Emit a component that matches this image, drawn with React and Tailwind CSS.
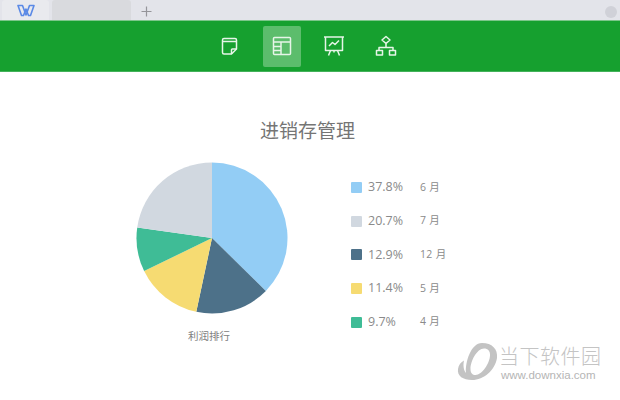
const FONT = "font-['Open_Sans','Noto_Sans_CJK_SC',sans-serif]";

const legend = [
  { color: "bg-[#93cdf5]", pct: "37.8%", month: "6 月" },
  { color: "bg-[#d1d8e0]", pct: "20.7%", month: "7 月" },
  { color: "bg-[#4d7189]", pct: "12.9%", month: "12 月" },
  { color: "bg-[#f6db72]", pct: "11.4%", month: "5 月" },
  { color: "bg-[#3fbc96]", pct: "9.7%", month: "4 月" },
];

const slices = [
  { from: 0, to: 134.5, fill: "#93cdf5" },
  { from: 134.5, to: 192, fill: "#4d7189" },
  { from: 192, to: 244, fill: "#f6db72" },
  { from: 244, to: 278, fill: "#3fbc96" },
  { from: 278, to: 360, fill: "#d1d8e0" },
];

function slicePath(from, to) {
  const r = 75.5;
  const pt = (deg) => {
    const a = (deg * Math.PI) / 180;
    return `${(76 + r * Math.sin(a)).toFixed(2)} ${(76 - r * Math.cos(a)).toFixed(2)}`;
  };
  return `M76 76 L${pt(from)} A${r} ${r} 0 ${to - from > 180 ? 1 : 0} 1 ${pt(to)} Z`;
}

function Pie() {
  return (
    <svg width="152" height="152" viewBox="0 0 152 152">
      {slices.map((s) => (
        <path key={s.from} d={slicePath(s.from, s.to)} fill={s.fill} />
      ))}
    </svg>
  );
}

function NoteIcon() {
  return (
    <svg width="20" height="20" viewBox="0 0 20 20" fill="none" stroke="#e6f5e8" strokeWidth="1.5" strokeLinejoin="round">
      <path d="M4 2.500h11a1.500 1.500 0 0 1 1.500 1.500V13l-5 5H4a1.500 1.500 0 0 1-1.500-1.500V4A1.500 1.500 0 0 1 4 2.500Z" />
      <path d="M2.500 5.500h14" />
      <path d="M16.500 13H12.300a.8.8 0 0 0-.8.8V18" />
    </svg>
  );
}

function TableIcon() {
  return (
    <svg width="20" height="20" viewBox="0 0 20 20" fill="none" stroke="#e6f5e8" strokeWidth="1.5">
      <rect x="1.500" y="1.500" width="17" height="17" rx="1" />
      <path d="M1.500 6h17M9 6v12.500M1.500 10.500h7.500M1.500 14.500h7.500" />
    </svg>
  );
}

function BoardIcon() {
  return (
    <svg width="24" height="24" viewBox="0 0 24 24" fill="none" stroke="#e6f5e8" strokeWidth="1.5" strokeLinejoin="round">
      <path d="M2 3h20" />
      <path d="M3.500 3v13.500h17V3" />
      <path d="M7 12l3.500-3.500 2.500 2 4-4" />
      <path d="M8.500 16.500l-2 5M15.500 16.500l2 5M12 16.500v2" />
    </svg>
  );
}

function FlowIcon() {
  return (
    <svg width="22" height="22" viewBox="0 0 22 22" fill="none" stroke="#e6f5e8" strokeWidth="1.5" strokeLinejoin="round">
      <path d="M11 1.500l4 3.500-4 3.500-4-3.500Z" />
      <path d="M11 8.500v4M4 15.500v-3h14v3" />
      <rect x="1.500" y="15.500" width="6" height="4.500" />
      <rect x="14.500" y="15.500" width="6" height="4.500" />
    </svg>
  );
}

function Watermark() {
  return (
    <div className="absolute left-[457px] top-[342px] flex items-start">
      <svg width="41" height="40" viewBox="0 0 41 40">
        <path
          d="M25 1C35 1 41 7 40 16C38 28 27 38 15 38C6 38 0 34 1 27C1.500 23 4 20 7 18.500C6 23 6.500 28 9 31C8 20 14 1 25 1ZM27 6.500C20 6.500 13.500 19 13.500 27C13.500 31 15.500 33 18.500 33C25 33 33 21 33 13C33 9 31 6.500 27 6.500Z"
          fill="#c3c3c3"
          fillRule="evenodd"
        />
      </svg>
      <div className="ml-[1px] flex flex-col">
        <div className="mt-[3px] text-[20px] leading-[22px] tracking-[0.5px] text-[#c4c4c4] font-['Noto_Sans_CJK_SC',sans-serif] font-light">当下软件园</div>
        <div className="mt-[1px] ml-[2px] text-[11.500px] leading-[14px] text-[#b5b5b5] font-['Liberation_Sans',sans-serif]">www.downxia.com</div>
      </div>
    </div>
  );
}

export default function App() {
  return (
    <div className={`relative h-[400px] w-[620px] overflow-hidden bg-white ${FONT}`}>
      {/* tab strip */}
      <div className="flex h-[21px] items-end border-b border-[#7cc68a] bg-[#e3e4ea] pl-[2px]">
        <div className="flex h-[20px] w-[47px] items-center justify-center rounded-t-[3px] bg-[#e9eaee]">
          <svg width="18" height="13" viewBox="0 0 18 13" fill="none" stroke="#5b8ae6" strokeWidth="1.600" strokeLinejoin="round">
            <path d="M1 1.500h4.500l3.500 9.500 3.500-9.500H17L13.500 11.500h-2L9 5l-2.500 6.500h-2Z" />
          </svg>
        </div>
        <div className="ml-[3px] h-[20px] w-[79px] rounded-t-[3px] bg-[#d9dade]" />
        <svg className="mb-[3px] ml-[10px]" width="11" height="11" viewBox="0 0 11 11" stroke="#95959a" strokeWidth="1.200">
          <path d="M5.500 0.500v10M0.500 5.500h10" />
        </svg>
        <div className="mb-[2px] ml-auto mr-[3px] h-[12px] w-[12px] rounded-full bg-[#d0d1d8]" />
      </div>

      {/* toolbar */}
      <div className="flex h-[51px] items-center justify-center gap-[14px] border-b border-[#43b25a] bg-[#16a02f] pr-[4px]">
        <div className="flex h-[41px] w-[38px] items-center justify-center"><NoteIcon /></div>
        <div className="flex h-[41px] w-[38px] items-center justify-center rounded-[2px] bg-[#5cbd6c]"><TableIcon /></div>
        <div className="flex h-[41px] w-[38px] items-center justify-center"><BoardIcon /></div>
        <div className="flex h-[41px] w-[38px] items-center justify-center"><FlowIcon /></div>
      </div>

      {/* sheet */}
      <div className="pt-[46px] pr-[5px] text-center text-[19px] leading-[26px] text-[#757575]">进销存管理</div>

      <div className="mt-[18px] flex items-start pl-[136px]">
        <div className="flex w-[152px] flex-col items-center">
          <Pie />
          <div className="mt-[15px] pr-[6px] text-[10.500px] leading-[14px] text-[#808080]">利润排行</div>
        </div>
        <div className="ml-[63px] flex flex-col gap-[13.700px] pt-[15.500px]">
          {legend.map((row) => (
            <div key={row.month} className="flex h-[20px] items-center">
              <span className={`h-[11px] w-[11px] rounded-[1px] ${row.color}`} />
              <span className="ml-[6px] w-[52px] text-[12.500px] text-[#8a8a8a]">{row.pct}</span>
              <span className="text-[10.500px] tracking-[0.3px] text-[#8a8a8a]">{row.month}</span>
            </div>
          ))}
        </div>
      </div>

      <Watermark />
    </div>
  );
}
